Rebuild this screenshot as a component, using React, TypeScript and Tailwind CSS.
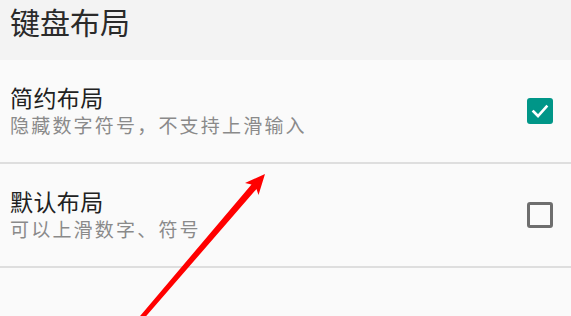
import React from "react";

const font = { fontFamily: '"Noto Sans CJK SC", "Noto Sans", sans-serif' };

function Checked() {
  return (
    <div className="w-[26px] h-[26px] rounded-[3px] bg-[#009688] flex items-center justify-center">
      <svg width="20" height="20" viewBox="0 0 20 20">
        <path d="M3.5 10.5 L8 15 L16.5 5.5" fill="none" stroke="#ffffff" strokeWidth="2.6" strokeLinecap="square" />
      </svg>
    </div>
  );
}

function Unchecked() {
  return <div className="w-[26px] h-[26px] rounded-[3px] border-[3px] border-[#6e6e6e]" />;
}

function Row({ title, sub, checked }: { title: string; sub: string; checked: boolean }) {
  return (
    <div className="h-[104px] border-b-2 border-[#dedede] flex pl-[10px] pr-[18px] bg-[#fafafa]">
      <div className="flex-1 flex flex-col pt-[22px]">
        <div className="text-[23px] leading-[30px] tracking-[0.4px] text-[#212121]">{title}</div>
        <div className="text-[19px] leading-[26px] tracking-[2.2px] text-[#8a8a8a]">{sub}</div>
      </div>
      <div className="self-center">{checked ? <Checked /> : <Unchecked />}</div>
    </div>
  );
}

export default function App() {
  return (
    <div className="relative w-[571px] h-[316px] overflow-hidden bg-[#fafafa]" style={font}>
      <div className="h-[60px] bg-[#f3f3f3] pl-[10px]">
        <div className="text-[30px] leading-[42px] text-[#2a2a2a]">键盘布局</div>
      </div>
      <Row title="简约布局" sub="隐藏数字符号，不支持上滑输入" checked={true} />
      <Row title="默认布局" sub="可以上滑数字、符号" checked={false} />
      <svg className="absolute inset-0 pointer-events-none" width="571" height="316" viewBox="0 0 571 316">
        <polygon
          points="265,174 245,183 251.5,184.5 135,322 141,322 256.5,189 258.5,195"
          fill="#ff0000"
        />
      </svg>
    </div>
  );
}
